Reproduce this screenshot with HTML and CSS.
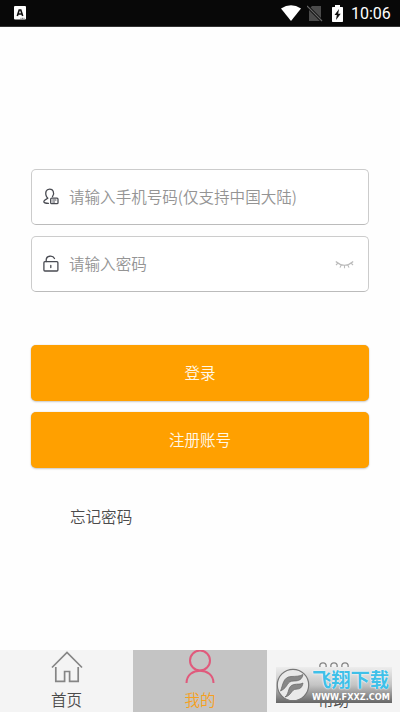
FILE: index.html
```html
<!DOCTYPE html>
<html lang="zh-CN">
<head>
<meta charset="utf-8">
<title>登录</title>
<link rel="stylesheet" href="styles.css">
</head>
<body>
<header class="status">
  <svg class="app-icon" width="12" height="14" viewBox="0 0 12 14"><rect width="12" height="13.5" rx="1" fill="#fff"/><path d="M3.3 10 5.2 4h1.6l1.9 6M4.2 8h3.6" fill="none" stroke="#111" stroke-width="1.6"/><path d="M6.5 12.3h4" stroke="#666" stroke-dasharray="1 .5"/></svg>
  <div class="status-right">
    <svg width="20" height="16" viewBox="0 0 20 16"><path d="M0 3.5Q10-3 20 3.5L10 16Z" fill="#fff"/></svg>
    <svg class="sim" width="16" height="17" viewBox="0 0 16 17"><path d="M5 1h9v15H2V4Z" fill="#4b4b4b"/><path d="m0 1 15 15" stroke="#080808" stroke-width="3"/><path d="m0 1 15 15" stroke="#666" stroke-width="1.2"/></svg>
    <svg class="battery" width="11" height="17" viewBox="0 0 11 17"><path d="M3 0h5v2h2.3q.7 0 .7.7v13.6q0 .7-.7.7H.7q-.7 0-.7-.7V2.700q0-.7.7-.7H3Z" fill="#fff"/><path d="M7 4 2.500 10h2.300L4 15l4.700-6.300H6.200Z" fill="#111"/></svg>
    <span class="clock">10:06</span>
  </div>
</header>
<main class="content">
  <form class="fields">
    <div class="field">
      <svg width="16" height="18" viewBox="0 0 16 18" fill="none" stroke="#494b52" stroke-width="1.3" stroke-linecap="round"><path d="M4.800 10.300C2.800 8.200 2.300 5.800 3.100 3.300 4.200.6 9 .5 10.200 3.200c.9 2 .4 4-.7 5.500M4.800 10.300C3.200 11.200.7 12 .8 13.600.9 15.100 3 15.300 5.500 15.300"/><rect x="7.700" y="10.200" width="7.300" height="5.500" rx="1"/><path d="M9.700 12h3.300M9.700 14h2" stroke-width="1"/></svg>
      <span class="hint">请输入手机号码(仅支持中国大陆)</span>
    </div>
    <div class="field">
      <svg width="16" height="18" viewBox="0 0 16 18" fill="none" stroke="#494b52" stroke-width="1.3" stroke-linecap="round"><rect x=".9" y="6.700" width="14" height="9.300" rx="1"/><path d="M3.200 6.500V5C3.200.4 9.900.1 11.500 3.500M7.800 10.500v2"/></svg>
      <span class="hint">请输入密码</span>
      <svg class="eye" width="19" height="9" viewBox="0 0 19 9" fill="none" stroke="#bbb" stroke-width="1.1"><path d="M.8 1.500q8.700 7.500 17.400 0M3 3 1 5M6.300 4.700 5 7.600M9.500 5.200v3M12.700 4.700 14 7.600M16 3l2 2"/></svg>
    </div>
  </form>
  <div class="actions">
    <button class="button">登录</button>
    <button class="button">注册账号</button>
  </div>
  <a class="forgot">忘记密码</a>
</main>
<nav class="tabs">
  <div class="tab">
    <svg width="34" height="34" viewBox="0 0 34 34" fill="none" stroke="#858585" stroke-width="1.700"><path d="M2 17.500 17 2.500l15 15M5.800 17v14.300h8.800V21.500h5v9.800h8.600V17"/></svg>
    <span>首页</span>
  </div>
  <div class="tab selected">
    <svg width="34" height="34" viewBox="0 0 34 34" fill="none" stroke="#e05a7c" stroke-width="2"><circle cx="17" cy="10.500" r="10"/><path d="M3.500 33c0-16.500 27-16.500 27 0"/></svg>
    <span>我的</span>
  </div>
  <div class="tab">
    <svg width="34" height="34" viewBox="0 0 34 34" fill="none" stroke="#858585" stroke-width="1.300"><circle cx="6" cy="16" r="3.200"/><circle cx="17" cy="16" r="3.200"/><circle cx="28" cy="16" r="3.200"/></svg>
    <span>帮助</span>
  </div>
  <div class="watermark">
    <svg class="mark" width="34" height="34" viewBox="0 0 34 34"><circle cx="17" cy="17" r="15.700" fill="#e9e9e9" stroke="#777" stroke-width="1.200"/><path d="M4.500 23C7 17 7 9 15 8.500c5-.2 8 0 12-2-1 5-4 6.500-9 6.500-8 0-5 6-13.500 10Z" fill="#888" stroke="#666" stroke-width=".7"/><path d="M9 29c5-4 2-11 9-12.500 4-.8 6 .2 9-1.500-1 5-3 6-7 6.200-5 .3-4 6-11 7.800Z" fill="#888" stroke="#666" stroke-width=".7"/></svg>
    <div class="brand"><b>飞翔下载</b><svg class="site" width="80" height="11"><text x="0" y="8.500" textLength="78" lengthAdjust="spacingAndGlyphs">WWW.FXXZ.COM</text></svg></div>
  </div>
</nav>
</body>
</html>
```
FILE: styles.css
```css
* { box-sizing: border-box; }
body {
  margin: 0;
  height: 712px;
  display: flex;
  flex-direction: column;
  overflow: hidden;
  background: #fefefe;
  color: #4b4b4b;
  font: 350 15.55px/22px "Noto Sans CJK SC", sans-serif;
}
svg { display: block; flex: none; }
.status {
  height: 27px;
  flex: none;
  display: flex;
  align-items: center;
  justify-content: space-between;
  padding: 0 9px 0 14px;
  background: #080808;
  border-bottom: 1px solid #333;
}
.status-right { display: flex; align-items: center; }
.sim { margin-left: 6px; }
.battery { margin-left: 9px; }
.clock {
  width: 40px;
  margin-left: 8px;
  padding-top: 2px;
  color: #fff;
  font: 400 16px/22px Roboto, sans-serif;
  white-space: nowrap;
}
.content { flex: 1; padding: 142px 31px 0; }
.fields, .actions { display: grid; gap: 11px; }
.field {
  height: 56px;
  display: flex;
  align-items: center;
  padding: 0 14px 0 11px;
  border: 1px solid #ccc;
  border-bottom-color: #bbb;
  border-radius: 5px;
  background: #fff;
}
.hint { margin-left: 10px; padding-bottom: 2px; color: #949494; white-space: nowrap; }
.eye { margin-left: auto; }
.actions { margin-top: 53px; }
.button {
  height: 56px;
  padding: 0 0 2px;
  border: 0;
  border-radius: 5px;
  background: #ffa000;
  box-shadow: 0 0 1px #bbb, 0 1px 2px #ccc;
  color: #fff8e8;
  font: inherit;
}
.forgot { display: block; margin: 37px 0 0 39px; }
.tabs {
  position: relative;
  height: 62px;
  flex: none;
  display: grid;
  grid-template-columns: 133px 134px 133px;
  background: #f4f4f4;
}
.tab {
  display: flex;
  flex-direction: column;
  align-items: center;
}
.tab span { margin-top: 4px; }
.selected { background: #c4c4c4; color: #f6a01e; }
.watermark {
  position: absolute;
  left: 276px;
  top: 17px;
  width: 116px;
  height: 36px;
  display: flex;
  align-items: center;
  background: linear-gradient(#ededed, #c4c4c4 50%, #666);
}
.brand { margin-left: 2px; }
.brand b {
  display: block;
  color: #3fc0e8;
  font-size: 19.3px;
  font-weight: 700;
  line-height: 23px;
  white-space: nowrap;
  text-shadow: 0 0 1px #fff, 0 0 2px #fff;
}
.site { fill: #fff; font: 700 8.5px "DejaVu Sans", sans-serif; }
```
